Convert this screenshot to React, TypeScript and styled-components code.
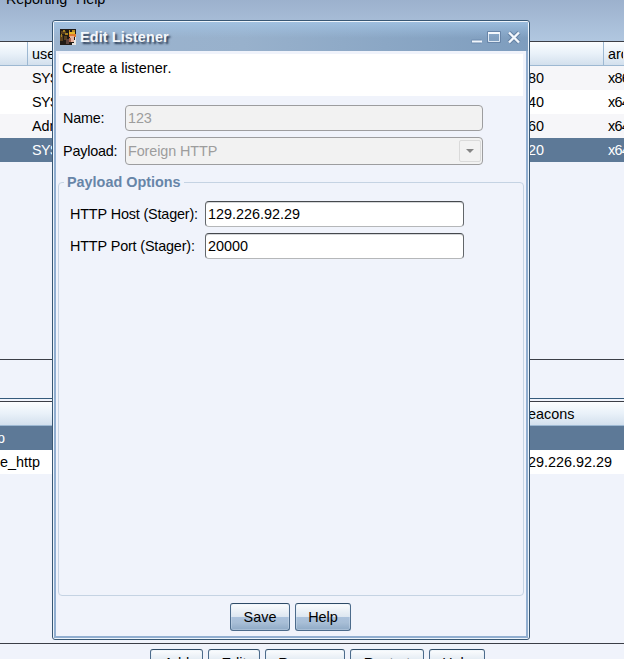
import React from "react";
import styled, { createGlobalStyle } from "styled-components";

const Global = createGlobalStyle`
  * { box-sizing: border-box; }
  html, body { margin: 0; padding: 0; overflow: hidden; }
  body { font-family: "Liberation Sans", Arial, sans-serif; font-size: 14.4px; font-kerning: none; color: #000; }
`;

const Desktop = styled.div`
  position: relative;
  width: 624px;
  height: 659px;
  overflow: hidden;
  background: #f0f3fb;
  display: flex;
  flex-direction: column;
  white-space: nowrap;
`;

const MenuBar = styled.div`
  height: 41px;
  flex: none;
  display: flex;
  gap: 9px;
  padding-left: 6px;
  line-height: 16px;
  letter-spacing: -0.15px;
  background: linear-gradient(#9cb1cd, #b1c7e0);
  span { margin-top: -9px; }
`;

const Table = styled.div<{ $height: number }>`
  height: ${(p) => p.$height}px;
  flex: none;
  border-top: 1px solid #3b3e46;
  border-bottom: 1px solid #3b3e46;
`;

const HeaderRow = styled.div<{ $columns: string }>`
  display: grid;
  grid-template-columns: ${(p) => p.$columns};
  height: 24px;
  line-height: 24px;
  border-bottom: 1px solid #9db8d2;
  background: linear-gradient(#fbfdff, #e9f1f9 50%, #d3e0ed);
`;

const HeaderCell = styled.div<{ $divider?: boolean }>`
  padding-left: 4px;
  overflow: hidden;
  border-right: 1px solid ${(p) => (p.$divider ? "#9db8d2" : "transparent")};
`;

const Row = styled.div<{ $columns: string; $tone: "odd" | "even" | "selected" }>`
  display: grid;
  grid-template-columns: ${(p) => p.$columns};
  height: 24px;
  line-height: 24px;
  background: ${(p) => ({ odd: "#f6f6f9", even: "#fff", selected: "#5d7997" })[p.$tone]};
  color: ${(p) => (p.$tone === "selected" ? "#fff" : "#000")};
`;

const Cell = styled.div<{ $tight?: boolean }>`
  padding-left: 4px;
  overflow: hidden;
  letter-spacing: ${(p) => (p.$tight ? "-0.7px" : "0")};
`;

const ListenerName = styled(Cell)`
  padding-left: 0;
  direction: rtl;
  width: 40px;
`;

const ShortName = styled(ListenerName)`
  width: 5px;
`;

const SplitGap = styled.div`
  height: 41px;
  flex: none;
  display: flex;
  align-items: flex-end;
  padding-bottom: 2px;
  &::after { content: ""; height: 1px; flex: 1; background: #355a7b; }
`;

const Toolbar = styled.div`
  display: flex;
  gap: 5px;
  padding: 5px 0 0 150px;
`;

const Button = styled.button<{ $width: number }>`
  width: ${(p) => p.$width}px;
  height: 28px;
  flex: none;
  padding: 0;
  font: inherit;
  line-height: 26px;
  color: #000;
  border: 1px solid #4c6b8b;
  border-top-color: #2d4a66;
  border-radius: 3px;
  background: linear-gradient(#fcfdfe, #dce6f0 50%, #abc2dc 51%, #a8bed6 72%, #8faac6);
  box-shadow: inset 0 0 0 1px rgba(222, 235, 247, 0.3);
`;

const Dialog = styled.section`
  position: absolute;
  left: 52px;
  top: 20px;
  width: 478px;
  height: 620px;
  border: 1px solid #385774;
  border-radius: 3px;
  background: #f0f3fb;
  box-shadow: inset 0 0 0 1px #edf4fb;
  padding: 1px;
`;

const DialogFrame = styled.div`
  height: 100%;
  border: 2px solid #91aed0;
  border-top: 0;
  display: flex;
  flex-direction: column;
`;

const TitleBar = styled.header`
  height: 29px;
  flex: none;
  margin: 0 -2px;
  padding: 0 7px 0 6px;
  display: flex;
  align-items: center;
  background: linear-gradient(rgba(164, 198, 231, 0.75), rgba(150, 178, 207, 0) 55%), linear-gradient(90deg, #9cb4cf, #98b1cc 40%, #7e9dbe);
`;

const Title = styled.h1`
  flex: 1;
  margin: 0 0 0 4px;
  padding-top: 1px;
  font-size: 14.4px;
  letter-spacing: 0.12px;
  line-height: 20px;
  font-weight: 700;
  color: #f4f7fb;
  text-shadow: 2px 2px 2px rgba(20, 35, 60, 0.85);
`;

const Banner = styled.div`
  height: 42px;
  flex: none;
  margin: 3px 3px 0;
  padding: 5px 3px;
  line-height: 18px;
  background: #fff;
`;

const Fields = styled.div`
  display: grid;
  grid-template-columns: 62px 358px;
  grid-template-rows: 26px 28px;
  row-gap: 6px;
  align-items: center;
  padding: 9px 0 0 7px;
`;

const FieldLabel = styled.span`
  letter-spacing: -0.2px;
`;

const ReadonlyBox = styled.div`
  height: 100%;
  display: flex;
  align-items: center;
  justify-content: space-between;
  border: 1px solid #9d9d9f;
  border-radius: 4px;
  background: #f2f2f2;
  color: #9d9d9d;
  padding: 0 1px 0 2px;
  letter-spacing: -0.1px;
`;

const DropButton = styled.span`
  width: 22px;
  height: 22px;
  display: grid;
  place-items: center;
  border: 1px solid #dadada;
  border-radius: 2px;
`;

const OptionsPanel = styled.fieldset`
  height: 423px;
  margin: 8px 2px 0;
  padding: 10px 0 0 11px;
  border: 1px solid #c5d3e3;
  border-radius: 4px;
  min-width: 0;
`;

const Legend = styled.legend`
  padding: 0 3px;
  margin-left: -6px;
  line-height: 18px;
  font-weight: 700;
  color: #6785a8;
`;

const OptionRow = styled.label`
  display: grid;
  grid-template-columns: 135px 259px;
  height: 26px;
  margin-bottom: 6px;
  align-items: center;
  letter-spacing: -0.17px;
`;

const Input = styled.input`
  width: 259px;
  height: 26px;
  padding: 0 2px;
  font: inherit;
  letter-spacing: 0;
  color: #000;
  background: #fff;
  border: 1px solid #62666a;
  border-top-color: #45494d;
  border-bottom-color: #b5b7b9;
  border-radius: 4px;
  box-shadow: inset 0 1px 0 #d5d7d9;
  outline: none;
`;

const Actions = styled.footer`
  display: flex;
  justify-content: center;
  gap: 5px;
  padding-top: 7px;
  margin-right: 1px;
`;

const AppIcon = () => (
  <svg width="16" height="16" viewBox="0 0 16 16" shapeRendering="crispEdges">
    <path fill="#211b16" d="M0 0h16v16H0z" />
    <path fill="#59401e" d="M1 2h5v3H1zM0 6h3v6H0zM4 7h3v4H4z" />
    <path fill="#a58121" d="M3 1h2v2H3zM5 4h3v2H5zM1 5h1v3H1z" />
    <path fill="#b98a22" d="M9 1h1v2H9zM12 1h3v2h-3z" />
    <path fill="#e3b72c" d="M9 3h6v2H9z" />
    <path fill="#df792f" d="M9 5h7v3h-2V7h-4v1H9z" />
    <path fill="#e6b29e" d="M10 7h4v6h-3v-2h-1z" />
    <path fill="#a8604d" d="M9 9h2v4H9z" />
    <path fill="#e9e7e4" d="M15 8h1v8h-4v-2h2v-3h1z" />
    <path fill="#5c423a" d="M6 10h3v5H6z" />
  </svg>
);

const WindowIcons = () => (
  <svg width="51" height="16" viewBox="0 0 51 16" fill="none">
    <path d="M1.5 10.5h10v4h-10z" fill="#6d8bae" />
    <path d="M2 12.5h10" stroke="#f2f6fc" strokeWidth="2" />
    <path d="M17.5 2.5h13v11h-13z" stroke="#6885a8" />
    <path d="M18.5 4.5h11v8h-11z" stroke="#dfe9f4" />
    <path d="M18 4h12" stroke="#f4f8fd" strokeWidth="2" />
    <path d="M39 3.5l10 10m0-10l-10 10" stroke="#6683a5" strokeWidth="4.5" />
    <path d="M39 3.5l10 10m0-10l-10 10" stroke="#f4f8fd" strokeWidth="2.4" />
  </svg>
);

const sessionColumns = "28px 496px 80px 20px";
const sessions = [
  ["SYSTEM", "80", "x86"],
  ["SYSTEM", "40", "x64"],
  ["Administrator", "60", "x64"],
  ["SYSTEM", "20", "x64"],
];
const listenerColumns = "524px 100px";

export default function App() {
  return (
    <>
      <Global />
      <Desktop>
        <MenuBar><span>Reporting</span><span>Help</span></MenuBar>
        <Table $height={319}>
          <HeaderRow $columns={sessionColumns}>
            <HeaderCell $divider /><HeaderCell>user</HeaderCell><HeaderCell $divider /><HeaderCell>arch</HeaderCell>
          </HeaderRow>
          {sessions.map(([user, pid, arch], i) => (
            <Row key={i} $columns={sessionColumns} $tone={i === 3 ? "selected" : i % 2 ? "even" : "odd"}>
              <Cell /><Cell $tight={user === "SYSTEM"}>{user}</Cell><Cell>{pid}</Cell><Cell $tight>{arch}</Cell>
            </Row>
          ))}
        </Table>
        <SplitGap />
        <Table $height={243}>
          <HeaderRow $columns={listenerColumns}><HeaderCell /><HeaderCell>eacons</HeaderCell></HeaderRow>
          <Row $columns={listenerColumns} $tone="selected"><ShortName>p</ShortName><Cell /></Row>
          <Row $columns={listenerColumns} $tone="even"><ListenerName>e_http</ListenerName><Cell>29.226.92.29</Cell></Row>
        </Table>
        <Toolbar>
          <Button $width={53}>Add</Button>
          <Button $width={52}>Edit</Button>
          <Button $width={80}>Remove</Button>
          <Button $width={74}>Restart</Button>
          <Button $width={56}>Help</Button>
        </Toolbar>

        <Dialog>
          <DialogFrame>
            <TitleBar><AppIcon /><Title>Edit Listener</Title><WindowIcons /></TitleBar>
            <Banner>Create a listener.</Banner>
            <Fields>
              <FieldLabel>Name:</FieldLabel><ReadonlyBox>123</ReadonlyBox>
              <FieldLabel>Payload:</FieldLabel>
              <ReadonlyBox>
                Foreign HTTP
                <DropButton><svg width="8" height="4" viewBox="0 0 8 4"><path d="M0 0h8L4 4z" fill="#858585" /></svg></DropButton>
              </ReadonlyBox>
            </Fields>
            <OptionsPanel>
              <Legend>Payload Options</Legend>
              <OptionRow>HTTP Host (Stager):<Input defaultValue="129.226.92.29" /></OptionRow>
              <OptionRow>HTTP Port (Stager):<Input defaultValue="20000" /></OptionRow>
            </OptionsPanel>
            <Actions><Button $width={60}>Save</Button><Button $width={56}>Help</Button></Actions>
          </DialogFrame>
        </Dialog>
      </Desktop>
    </>
  );
}
